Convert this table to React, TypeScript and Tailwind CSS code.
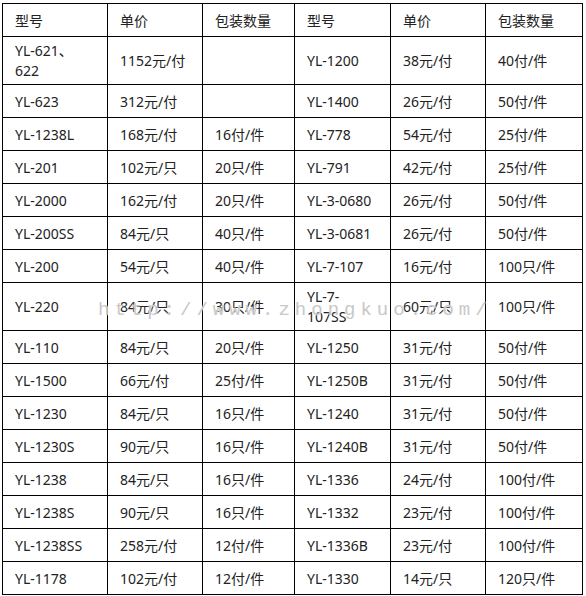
const rows: [string, string, string, string, string, string][] = [
  ["YL-621、622", "1152元/付", "", "YL-1200", "38元/付", "40付/件"],
  ["YL-623", "312元/付", "", "YL-1400", "26元/付", "50付/件"],
  ["YL-1238L", "168元/付", "16付/件", "YL-778", "54元/付", "25付/件"],
  ["YL-201", "102元/只", "20只/件", "YL-791", "42元/付", "25付/件"],
  ["YL-2000", "162元/付", "20只/件", "YL-3-0680", "26元/付", "50付/件"],
  ["YL-200SS", "84元/只", "40只/件", "YL-3-0681", "26元/付", "50付/件"],
  ["YL-200", "54元/只", "40只/件", "YL-7-107", "16元/付", "100只/件"],
  ["YL-220", "84元/只", "30只/件", "YL-7-107SS", "60元/只", "100只/件"],
  ["YL-110", "84元/只", "20只/件", "YL-1250", "31元/付", "50付/件"],
  ["YL-1500", "66元/付", "25付/件", "YL-1250B", "31元/付", "50付/件"],
  ["YL-1230", "84元/只", "16只/件", "YL-1240", "31元/付", "50付/件"],
  ["YL-1230S", "90元/只", "16只/件", "YL-1240B", "31元/付", "50付/件"],
  ["YL-1238", "84元/只", "16只/件", "YL-1336", "24元/付", "100付/件"],
  ["YL-1238S", "90元/只", "16只/件", "YL-1332", "23元/付", "100付/件"],
  ["YL-1238SS", "258元/付", "12付/件", "YL-1336B", "23元/付", "100付/件"],
  ["YL-1178", "102元/付", "12付/件", "YL-1330", "14元/只", "120只/件"],
];

const header = ["型号", "单价", "包装数量", "型号", "单价", "包装数量"];

// two-line cells: model names that wrap in the narrow first/fourth column
const wrapped: Record<string, string[]> = {
  "YL-621、622": ["YL-621、", "622"],
  "YL-7-107SS": ["YL-7-", "107SS"],
};

const Cell = ({ text, tall }: { text: string; tall: boolean }) => {
  const lines = wrapped[text];
  return (
    <div
      className={`flex items-center bg-white pl-3 ${tall ? "h-[47px]" : "h-[32px]"}`}
    >
      {lines ? (
        <div className="leading-[20px]">
          {lines.map((l) => (
            <div key={l}>{l}</div>
          ))}
        </div>
      ) : (
        <span>{text}</span>
      )}
    </div>
  );
};

export default function App() {
  return (
    <div className="h-[596px] w-[586px] overflow-hidden bg-white pl-[2px] pt-[3px]">
      <div className="relative w-[581px]">
        <div
          className="grid grid-cols-[104px_94px_91px_95px_94px_96px] gap-px bg-black p-px text-[14px] text-[#222]"
          style={{ fontFamily: '"Noto Sans", "Noto Sans CJK SC", sans-serif' }}
        >
          {header.map((h, i) => (
            <Cell key={"h" + i} text={h} tall={false} />
          ))}
          {rows.map((r, ri) => {
            const tall = r.some((c) => wrapped[c]);
            return r.map((c, ci) => (
              <Cell key={ri + "-" + ci} text={c} tall={tall} />
            ));
          })}
        </div>

        {/* faint site watermark across the middle */}
        <div className="pointer-events-none absolute left-[96px] top-[293px] font-['Liberation_Mono',monospace] text-[19px] tracking-[5px] text-[#c8c8c8] [text-shadow:0_0_2px_#fff]">
          http://www.zhongkuo.com/
        </div>
      </div>
    </div>
  );
}
